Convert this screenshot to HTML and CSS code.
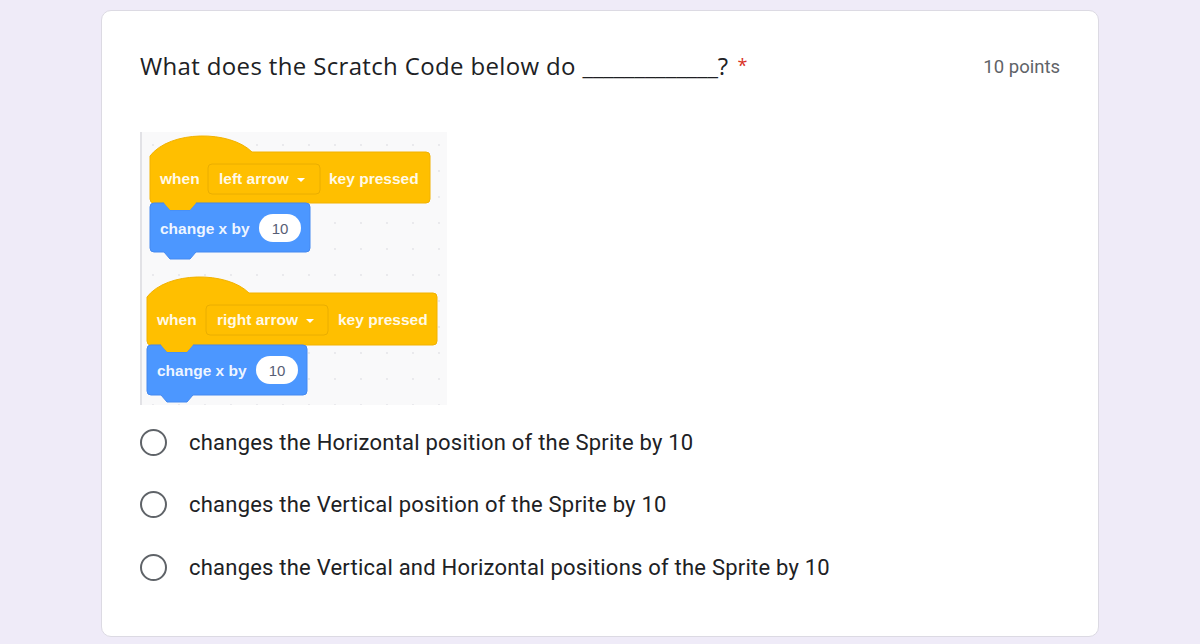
FILE: index.html
```html
<!DOCTYPE html>
<html>
<head>
<meta charset="utf-8">
<link rel="stylesheet" href="styles.css">
</head>
<body>
<div class="page">
  <div class="card">
    <div class="header">
      <div class="title">What does the Scratch Code below do <span class="blank">_____________</span>?<span class="req">*</span></div>
      <div class="points">10 points</div>
    </div>
    <div class="picture">
      <svg width="307" height="273" viewBox="0 0 307 273" xmlns="http://www.w3.org/2000/svg">
        <defs>
          <pattern id="dots" x="0" y="0" width="26" height="26" patternUnits="userSpaceOnUse">
            <circle cx="13" cy="13" r="0.9" fill="#e3e3e8"/>
          </pattern>
        </defs>
        <rect x="0" y="0" width="307" height="273" fill="#f9f9fa"/>
        <rect x="0" y="0" width="307" height="273" fill="url(#dots)"/>
        <rect x="0" y="0" width="2" height="273" fill="#e2e2e6"/>

        <!-- block 1 -->
        <path d="M10 24 C30 -2 90 -2 112 20 H286 a4 4 0 0 1 4 4 V67 a4 4 0 0 1 -4 4 H56 l-6 7 H30 l-6 -7 H14 a4 4 0 0 1 -4 -4 Z" fill="#ffbf00" stroke="#f2b200" stroke-width="1"/>
        <rect x="68" y="32" width="112" height="30" rx="4" fill="#ffbf00" stroke="#eaae00" stroke-width="1"/>
        <text x="20" y="52" class="blk">when</text>
        <text x="79" y="52" class="blk">left arrow</text>
        <path d="M157 46 h8 l-4 4 z" fill="#fff"/>
        <text x="189" y="52" class="blk">key pressed</text>

        <path d="M10 75 a4 4 0 0 1 4 -4 H24 l6 7 H50 l6 -7 H166 a4 4 0 0 1 4 4 V116 a4 4 0 0 1 -4 4 H56 l-6 7 H30 l-6 -7 H14 a4 4 0 0 1 -4 -4 Z" fill="#4c97ff" stroke="#4489f0" stroke-width="1"/>
        <path d="M24 71 l6 7 H50 l6 -7 Z" fill="#ffbf00"/>
        <text x="20" y="102" class="blk">change x by</text>
        <rect x="119" y="82" width="42" height="28" rx="14" fill="#fff"/>
        <text x="140" y="102" class="num" text-anchor="middle">10</text>

        <!-- block 2 -->
        <path d="M7 165 C27 139 87 139 109 161 H293 a4 4 0 0 1 4 4 V209 a4 4 0 0 1 -4 4 H53 l-6 7 H27 l-6 -7 H11 a4 4 0 0 1 -4 -4 Z" fill="#ffbf00" stroke="#f2b200" stroke-width="1"/>
        <rect x="66" y="173" width="122" height="30" rx="4" fill="#ffbf00" stroke="#eaae00" stroke-width="1"/>
        <text x="17" y="193" class="blk">when</text>
        <text x="77" y="193" class="blk">right arrow</text>
        <path d="M166 187 h8 l-4 4 z" fill="#fff"/>
        <text x="198" y="193" class="blk">key pressed</text>

        <path d="M7 217 a4 4 0 0 1 4 -4 H21 l6 7 H47 l6 -7 H163 a4 4 0 0 1 4 4 V259 a4 4 0 0 1 -4 4 H53 l-6 7 H27 l-6 -7 H11 a4 4 0 0 1 -4 -4 Z" fill="#4c97ff" stroke="#4489f0" stroke-width="1"/>
        <path d="M21 213 l6 7 H47 l6 -7 Z" fill="#ffbf00"/>
        <text x="17" y="244" class="blk">change x by</text>
        <rect x="116" y="224" width="42" height="28" rx="14" fill="#fff"/>
        <text x="137" y="244" class="num" text-anchor="middle">10</text>
      </svg>
    </div>
    <div class="options">
      <div class="option"><span class="radio"></span><span class="label">changes the Horizontal position of the Sprite by 10</span></div>
      <div class="option"><span class="radio"></span><span class="label">changes the Vertical position of the Sprite by 10</span></div>
      <div class="option"><span class="radio"></span><span class="label">changes the Vertical and Horizontal positions of the Sprite by 10</span></div>
    </div>
  </div>
</div>
</body>
</html>
```

FILE: styles.css
```css
html, body {
  margin: 0;
  padding: 0;
  background: #efebf8;
}
.page {
  padding: 10px 101px 7px 101px;
  box-sizing: border-box;
  height: 644px;
}
.card {
  background: #fff;
  border: 1px solid #dcdae3;
  border-radius: 10px;
  height: 627px;
  box-sizing: border-box;
  padding: 38px 38px 0 38px;
}
.header {
  display: flex;
  justify-content: space-between;
  align-items: center;
  height: 32px;
}
.title {
  font-family: "Open Sans", Roboto, "Liberation Sans", sans-serif;
  font-size: 24px;
  color: #202124;
  letter-spacing: 0.35px;
}
.blank {
  letter-spacing: -0.1px;
}
.req {
  color: #d93025;
  margin-left: 9px;
  font-size: 18px;
  vertical-align: 3px;
}
.points {
  font-family: Roboto, "Liberation Sans", sans-serif;
  font-size: 18.5px;
  color: #5f6368;
  margin-top: 4px;
}
.picture {
  margin-top: 51px;
  height: 273px;
  line-height: 0;
}
.blk {
  font-family: "Liberation Sans", Arial, sans-serif;
  font-size: 15.5px;
  font-weight: bold;
  fill: #ffffff;
  fill-opacity: 0.92;
}
.num {
  font-family: "Liberation Sans", Arial, sans-serif;
  font-size: 15px;
  fill: #575e75;
}
.options {
  margin-top: 6px;
  display: flex;
  flex-direction: column;
}
.option {
  display: flex;
  align-items: center;
  height: 62.5px;
}
.radio {
  width: 23px;
  height: 23px;
  border: 2.5px solid #5f6368;
  border-radius: 50%;
  flex: none;
}
.label {
  margin-left: 22px;
  font-family: Roboto, "Liberation Sans", sans-serif;
  font-size: 22px;
  color: #202124;
  letter-spacing: 0.22px;
}
```
